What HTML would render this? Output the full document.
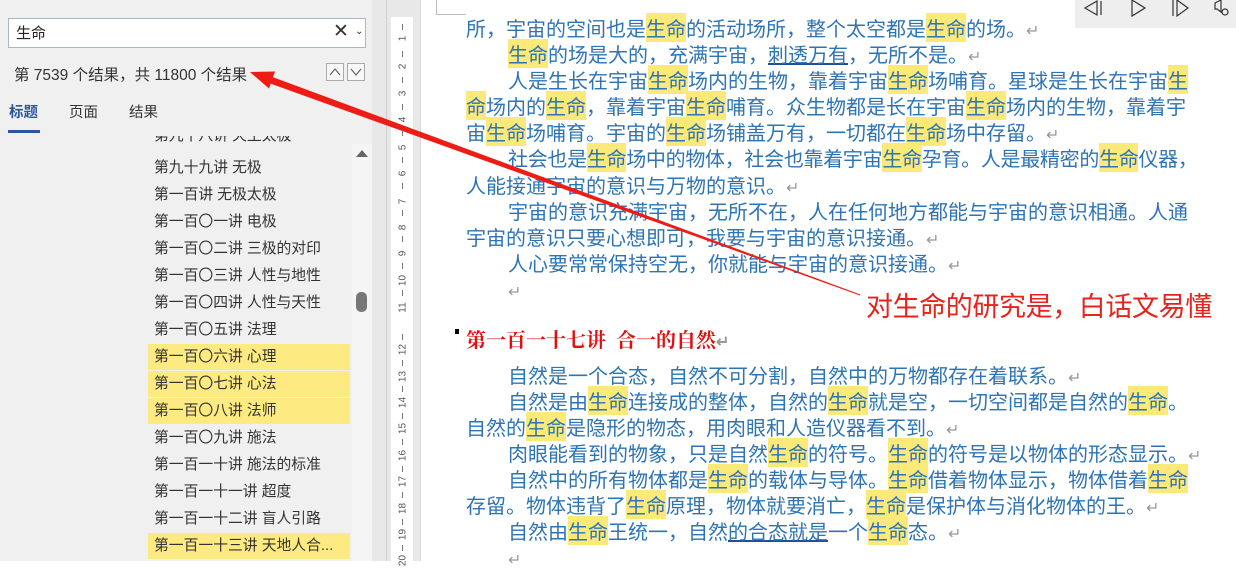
<!DOCTYPE html>
<html><head><meta charset="utf-8"><style>
*{margin:0;padding:0;box-sizing:border-box}
body{width:1236px;height:561px;overflow:hidden;position:relative;background:#fff;font-family:"Liberation Sans","Noto Sans CJK SC",sans-serif}
.pane{position:absolute;left:0;top:0;width:372px;height:561px;background:#f0f0f0}
.ab{position:absolute;white-space:nowrap}
.item{position:absolute;left:148px;width:202px;height:26px;line-height:26px;padding-left:6px;font-size:14.8px;color:#333}
.hl{background:#fdea80}
.l{position:absolute;white-space:nowrap;font-size:20px;line-height:26px;color:#2e74b5;font-family:"Noto Sans CJK SC",sans-serif}
.y{background:#fbe97a}
.r{color:#999;font-size:16px}
.u{text-decoration:underline;text-decoration-color:#1f4e9a}
.rn{position:absolute;left:396px;width:14px;text-align:center;font-size:10px;color:#555;transform:rotate(-90deg)}
.tk{position:absolute;left:402px;width:1px;height:6px;background:#777}
</style></head><body>
<div class="pane">
 <div class="ab" style="left:8px;top:18px;width:358px;height:30px;background:#fff;border:1px solid #a8b6cc"></div>
 <div class="ab" style="left:16px;top:22px;font-size:15px;color:#222">生命</div>
 <div class="ab" style="left:333px;top:20px;font-size:19px;color:#333">✕</div>
 <div class="ab" style="left:355px;top:26px;font-size:10px;color:#333">⌄</div>
 <div class="ab" style="left:14px;top:63px;font-size:15.5px;color:#333">第 7539 个结果，共 11800 个结果</div>
 <div class="ab" style="left:326px;top:63px;width:18px;height:18px;border:1px solid #aaa;background:#f8f8f8"></div>
 <div class="ab" style="left:347px;top:63px;width:18px;height:18px;border:1px solid #aaa;background:#f8f8f8"></div>
 <svg class="ab" style="left:326px;top:63px" width="40" height="18"><path d="M4 12 L9 6 L14 12" stroke="#555" fill="none"/><path d="M25 6 L30 12 L35 6" stroke="#555" fill="none"/></svg>
 <div class="ab" style="left:9px;top:101px;font-size:14.5px;color:#2b579a;font-weight:bold">标题</div>
 <div class="ab" style="left:8px;top:130px;width:32px;height:3px;background:#2b579a"></div>
 <div class="ab" style="left:69px;top:101px;font-size:14.5px;color:#333">页面</div>
 <div class="ab" style="left:129px;top:101px;font-size:14.5px;color:#333">结果</div>
 <div class="ab" style="left:148px;top:136px;width:210px;height:425px;overflow:hidden">
  <div class="item" style="left:0;top:-13px">第九十八讲 天王太极</div>
 </div>
 <div class="item" style="top:155px">第九十九讲 无极</div>
 <div class="item" style="top:182px">第一百讲 无极太极</div>
 <div class="item" style="top:209px">第一百〇一讲 电极</div>
 <div class="item" style="top:236px">第一百〇二讲 三极的对印</div>
 <div class="item" style="top:263px">第一百〇三讲 人性与地性</div>
 <div class="item" style="top:290px">第一百〇四讲 人性与天性</div>
 <div class="item" style="top:317px">第一百〇五讲 法理</div>
 <div class="item hl" style="top:344px">第一百〇六讲 心理</div>
 <div class="item hl" style="top:371px">第一百〇七讲 心法</div>
 <div class="item hl" style="top:398px">第一百〇八讲 法师</div>
 <div class="item" style="top:425px">第一百〇九讲 施法</div>
 <div class="item" style="top:452px">第一百一十讲 施法的标准</div>
 <div class="item" style="top:479px">第一百一十一讲 超度</div>
 <div class="item" style="top:506px">第一百一十二讲 盲人引路</div>
 <div class="item hl" style="top:533px">第一百一十三讲 天地人合...</div>
 <div class="ab" style="left:352px;top:144px;width:20px;height:417px;background:#f5f5f5"></div>
 <svg class="ab" style="left:355px;top:148px" width="14" height="10"><path d="M1 9 L7 2 L13 9Z" fill="#666"/></svg>
 <div class="ab" style="left:356px;top:292px;width:11px;height:20px;border-radius:5px;background:#777"></div>
</div>
<div class="ab" style="left:372px;top:0;width:48px;height:561px;background:#e8e8e8"></div>
<div class="ab" style="left:386px;top:0;width:1px;height:561px;background:#cfcfcf"></div>
<div class="ab" style="left:391px;top:17px;width:22px;height:544px;background:#fff"></div>
<div class="ab" style="left:420px;top:0;width:1px;height:561px;background:#d8d8d8"></div>
<div class="ab" style="left:436px;top:0;width:1px;height:15px;background:#bbb"></div>
<div class="ab" style="left:436px;top:14px;width:30px;height:1px;background:#bbb"></div>
<div class="ab" style="left:1075px;top:0;width:161px;height:28px;background:#eeeeee"></div>
<svg class="ab" style="left:1075px;top:0" width="161" height="28"><g stroke="#333" fill="none" stroke-width="1.2"><path d="M22 1 L10 8 L22 15 Z M26 1 L26 15"/><path d="M57 0 L70 8 L57 16 Z"/><path d="M98 0 L98 16 M102 0 L113 8 L102 16 Z"/><path d="M142 2 L146 0 L146 12 L142 9 L140 9 L140 3 Z"/><circle cx="150" cy="12" r="3"/></g></svg>

<div class="l" style="left:466px;top:15px">所，宇宙的空间也是<span class="y">生命</span>的活动场所，整个太空都是<span class="y">生命</span>的场。<span class="r">↵</span></div>
<div class="l" style="left:508px;top:41px"><span class="y">生命</span>的场是大的，充满宇宙，<span class="u">刺透万有</span>，无所不是。<span class="r">↵</span></div>
<div class="l" style="left:508px;top:67px">人是生长在宇宙<span class="y">生命</span>场内的生物，靠着宇宙<span class="y">生命</span>场哺育。星球是生长在宇宙<span class="y">生</span></div>
<div class="l" style="left:466px;top:93px"><span class="y">命</span>场内的<span class="y">生命</span>，靠着宇宙<span class="y">生命</span>哺育。众生物都是长在宇宙<span class="y">生命</span>场内的生物，靠着宇</div>
<div class="l" style="left:466px;top:119px">宙<span class="y">生命</span>场哺育。宇宙的<span class="y">生命</span>场铺盖万有，一切都在<span class="y">生命</span>场中存留。<span class="r">↵</span></div>
<div class="l" style="left:508px;top:145px;letter-spacing:-0.3px">社会也是<span class="y">生命</span>场中的物体，社会也靠着宇宙<span class="y">生命</span>孕育。人是最精密的<span class="y">生命</span>仪器，</div>
<div class="l" style="left:466px;top:172px">人能接通宇宙的意识与万物的意识。<span class="r">↵</span></div>
<div class="l" style="left:508px;top:198px">宇宙的意识充满宇宙，无所不在，人在任何地方都能与宇宙的意识相通。人通</div>
<div class="l" style="left:466px;top:224px">宇宙的意识只要心想即可，我要与宇宙的意识接通。<span class="r">↵</span></div>
<div class="l" style="left:508px;top:250px">人心要常常保持空无，你就能与宇宙的意识接通。<span class="r">↵</span></div>
<div class="l" style="left:508px;top:276px"><span class="r">↵</span></div>
<div class="ab" style="left:455px;top:329px;width:4px;height:5px;background:#000"></div>
<div class="l" style="left:466px;top:326px;color:#e01010;font-weight:bold;font-size:20px;font-family:'Noto Serif CJK SC',serif">第一百一十七讲&nbsp; 合一的自然<span class="r">↵</span></div>
<div class="l" style="left:508px;top:362px">自然是一个合态，自然不可分割，自然中的万物都存在着联系。<span class="r">↵</span></div>
<div class="l" style="left:508px;top:388px">自然是由<span class="y">生命</span>连接成的整体，自然的<span class="y">生命</span>就是空，一切空间都是自然的<span class="y">生命</span>。</div>
<div class="l" style="left:466px;top:414px">自然的<span class="y">生命</span>是隐形的物态，用肉眼和人造仪器看不到。<span class="r">↵</span></div>
<div class="l" style="left:508px;top:440px">肉眼能看到的物象，只是自然<span class="y">生命</span>的符号。<span class="y">生命</span>的符号是以物体的形态显示。<span class="r">↵</span></div>
<div class="l" style="left:508px;top:466px">自然中的所有物体都是<span class="y">生命</span>的载体与导体。<span class="y">生命</span>借着物体显示，物体借着<span class="y">生命</span></div>
<div class="l" style="left:466px;top:492px">存留。物体违背了<span class="y">生命</span>原理，物体就要消亡，<span class="y">生命</span>是保护体与消化物体的王。<span class="r">↵</span></div>
<div class="l" style="left:508px;top:518px">自然由<span class="y">生命</span>王统一，自然<span class="u">的合态就是</span>一个<span class="y">生命</span>态。<span class="r">↵</span></div>
<div class="l" style="left:508px;top:544px"><span class="r">↵</span></div>

<div class="ab" style="left:866px;top:285px;font-size:27px;color:#e8221c;font-family:'Noto Sans CJK SC',sans-serif;letter-spacing:-0.4px">对生命的研究是，白话文易懂</div>
<svg class="ab" style="left:0;top:0" width="1236" height="561"><polygon points="250,72 275,71.5 269,88.5" fill="#ee1c14"/><polygon points="269,75.7 266.8,82.3 860,295.5 860.3,294.5" fill="#ee1c14"/></svg>

<div class="rn" style="top:33px">1</div><div class="rn" style="top:61px">2</div><div class="rn" style="top:88px">3</div><div class="rn" style="top:114px">4</div><div class="rn" style="top:142px">5</div><div class="rn" style="top:168px">6</div><div class="rn" style="top:196px">7</div><div class="rn" style="top:222px">8</div><div class="rn" style="top:248px">9</div><div class="rn" style="top:275px">10</div><div class="rn" style="top:302px">11</div><div class="rn" style="top:344px">12</div><div class="rn" style="top:371px">13</div><div class="rn" style="top:397px">14</div><div class="rn" style="top:423px">15</div><div class="rn" style="top:450px">16</div><div class="rn" style="top:476px">17</div><div class="rn" style="top:503px">18</div><div class="rn" style="top:529px">19</div><div class="rn" style="top:555px">20</div>
<div class="tk" style="top:24px"></div><div class="tk" style="top:51px"></div><div class="tk" style="top:77px"></div><div class="tk" style="top:104px"></div><div class="tk" style="top:130px"></div><div class="tk" style="top:157px"></div><div class="tk" style="top:183px"></div><div class="tk" style="top:210px"></div><div class="tk" style="top:236px"></div><div class="tk" style="top:263px"></div><div class="tk" style="top:290px"></div><div class="tk" style="top:334px"></div><div class="tk" style="top:360px"></div><div class="tk" style="top:386px"></div><div class="tk" style="top:413px"></div><div class="tk" style="top:439px"></div><div class="tk" style="top:466px"></div><div class="tk" style="top:492px"></div><div class="tk" style="top:519px"></div><div class="tk" style="top:545px"></div>
</body></html>
